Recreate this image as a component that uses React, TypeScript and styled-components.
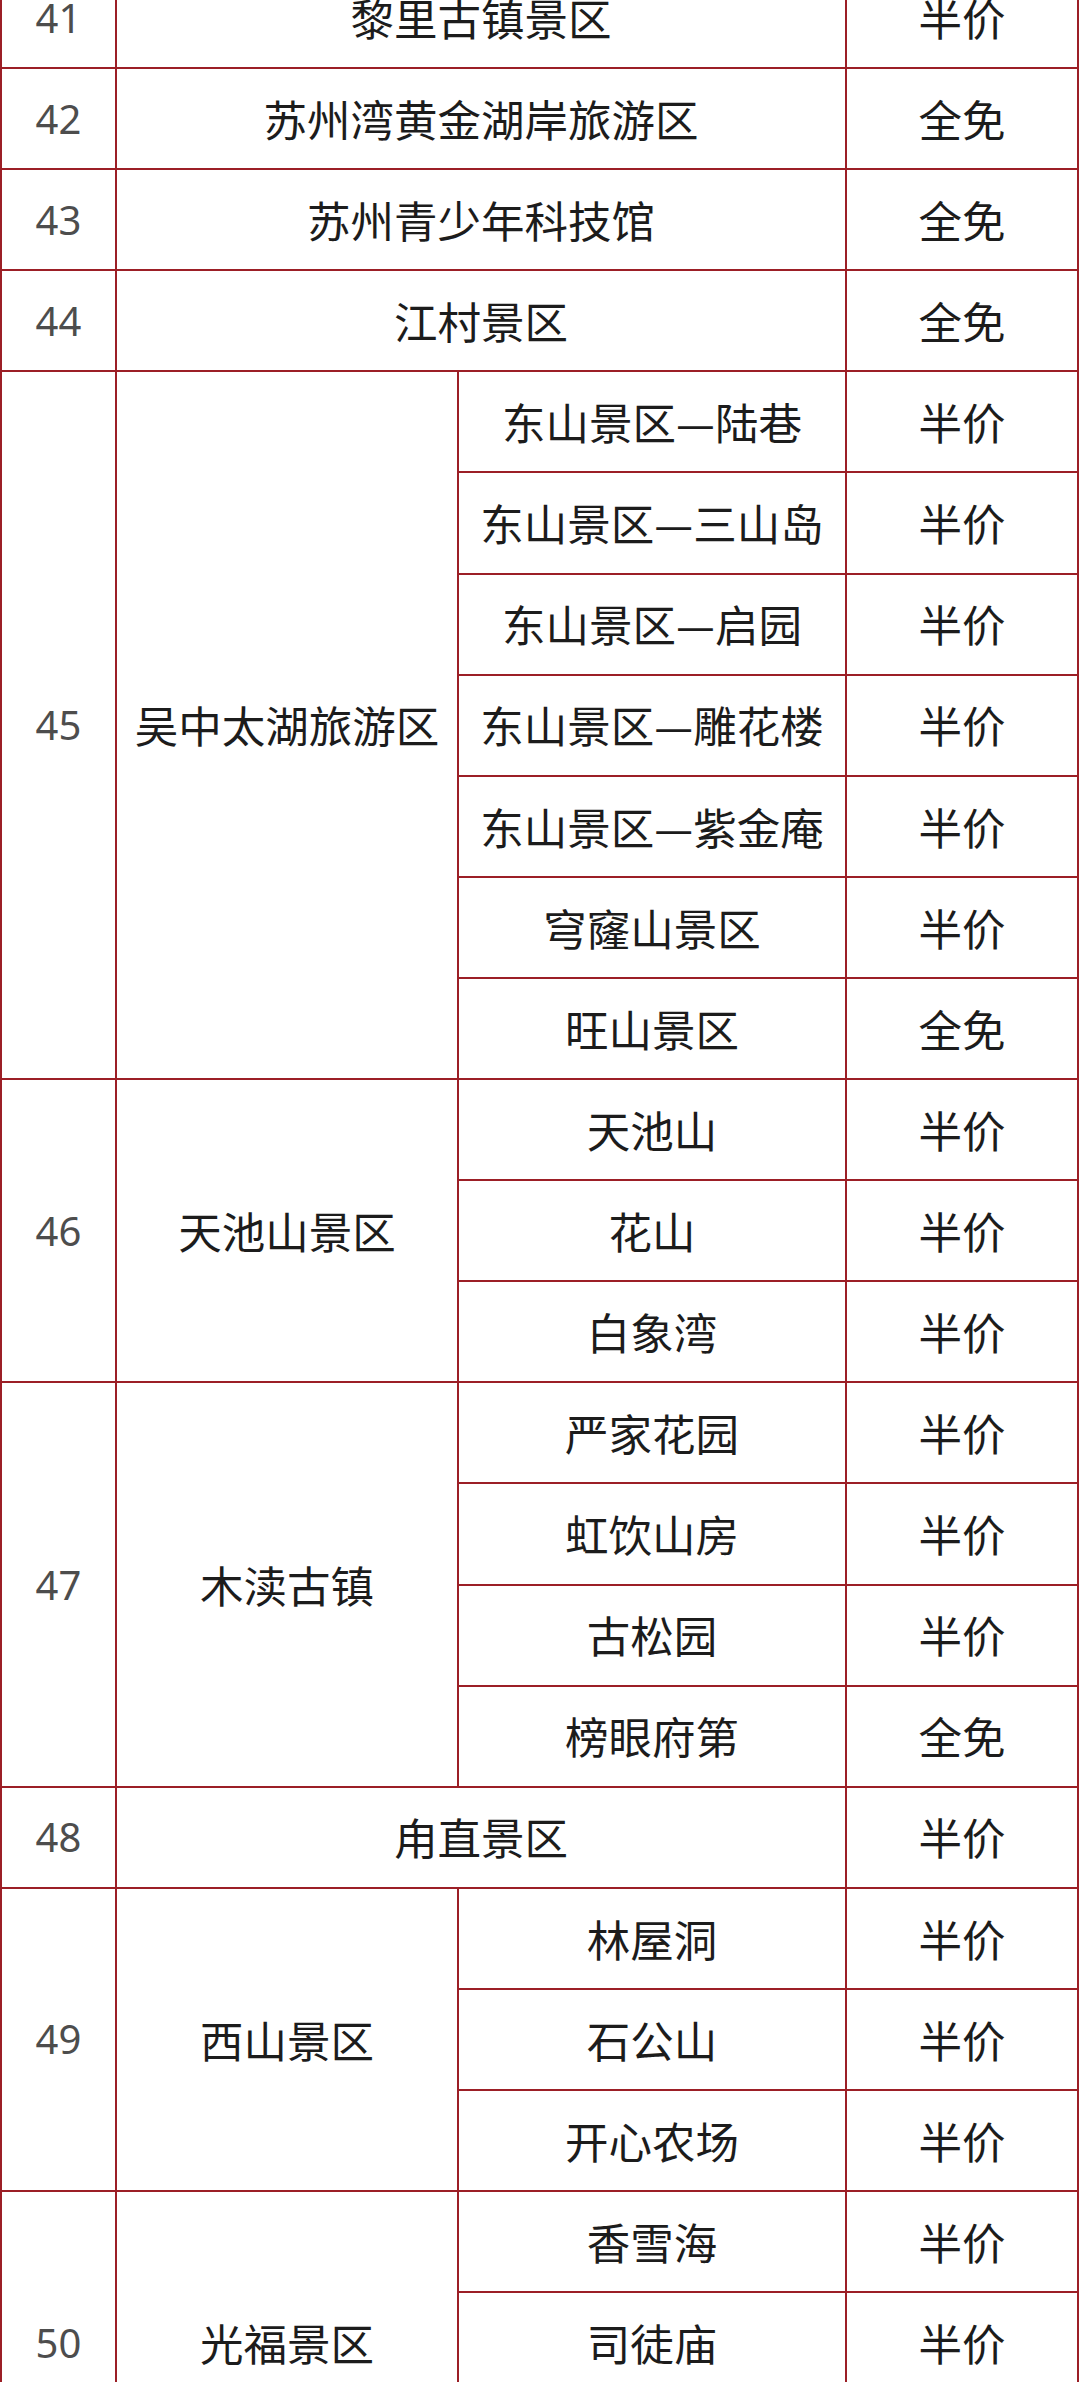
import React from 'react'
import styled, { createGlobalStyle } from 'styled-components'

const GlobalStyle = createGlobalStyle`
  html, body {
    margin: 0;
    padding: 0;
    background: #ffffff;
    overflow: hidden;
  }
  body {
    font-family: "Noto Sans CJK SC", "Noto Sans", sans-serif;
  }
`

type Sub = { name: string; price: string }
type Entry = { no: number; name: string; price?: string; subs?: Sub[] }

const half = '半价'
const free = '全免'

const entries: Entry[] = [
  { no: 41, name: '黎里古镇景区', price: half },
  { no: 42, name: '苏州湾黄金湖岸旅游区', price: free },
  { no: 43, name: '苏州青少年科技馆', price: free },
  { no: 44, name: '江村景区', price: free },
  {
    no: 45,
    name: '吴中太湖旅游区',
    subs: [
      { name: '东山景区—陆巷', price: half },
      { name: '东山景区—三山岛', price: half },
      { name: '东山景区—启园', price: half },
      { name: '东山景区—雕花楼', price: half },
      { name: '东山景区—紫金庵', price: half },
      { name: '穹窿山景区', price: half },
      { name: '旺山景区', price: free },
    ],
  },
  {
    no: 46,
    name: '天池山景区',
    subs: [
      { name: '天池山', price: half },
      { name: '花山', price: half },
      { name: '白象湾', price: half },
    ],
  },
  {
    no: 47,
    name: '木渎古镇',
    subs: [
      { name: '严家花园', price: half },
      { name: '虹饮山房', price: half },
      { name: '古松园', price: half },
      { name: '榜眼府第', price: free },
    ],
  },
  { no: 48, name: '甪直景区', price: half },
  {
    no: 49,
    name: '西山景区',
    subs: [
      { name: '林屋洞', price: half },
      { name: '石公山', price: half },
      { name: '开心农场', price: half },
    ],
  },
  {
    no: 50,
    name: '光福景区',
    subs: [
      { name: '香雪海', price: half },
      { name: '司徒庙', price: half },
      { name: '邓尉山', price: half },
    ],
  },
]

const line = '#9c1f26'

const Page = styled.div`
  width: 1080px;
  overflow: hidden;
`

// first row is cut by the top edge of the screenshot
const Table = styled.table`
  width: 1079px;
  margin-top: -34px;
  border-collapse: collapse;
  table-layout: fixed;
  border: 2px solid ${line};
`

const Row = styled.tr`
  height: 101.1px;
`

const Cell = styled.td`
  border: 2px solid ${line};
  padding: 0 4px;
  text-align: center;
  vertical-align: middle;
  font-family: "Noto Sans CJK SC", "Noto Sans", sans-serif;
  font-size: 43.5px;
  font-weight: 400;
  line-height: 1;
  color: #1c1c1c;
  white-space: nowrap;
`

const NumCell = styled(Cell)`
  font-family: "Noto Sans", "Open Sans", sans-serif;
  font-size: 40px;
  color: #4d4d4d;
`

export default function App() {
  return (
    <>
      <GlobalStyle />
      <Page>
        <Table>
          <colgroup>
            <col style={{ width: 115 }} />
            <col style={{ width: 342 }} />
            <col style={{ width: 388 }} />
            <col style={{ width: 232 }} />
          </colgroup>
          <tbody>
            {entries.map((e) =>
              e.subs ? (
                e.subs.map((s, i) => (
                  <Row key={`${e.no}-${i}`}>
                    {i === 0 && <NumCell rowSpan={e.subs!.length}>{e.no}</NumCell>}
                    {i === 0 && <Cell rowSpan={e.subs!.length}>{e.name}</Cell>}
                    <Cell>{s.name}</Cell>
                    <Cell>{s.price}</Cell>
                  </Row>
                ))
              ) : (
                <Row key={e.no}>
                  <NumCell>{e.no}</NumCell>
                  <Cell colSpan={2}>{e.name}</Cell>
                  <Cell>{e.price}</Cell>
                </Row>
              )
            )}
          </tbody>
        </Table>
      </Page>
    </>
  )
}
